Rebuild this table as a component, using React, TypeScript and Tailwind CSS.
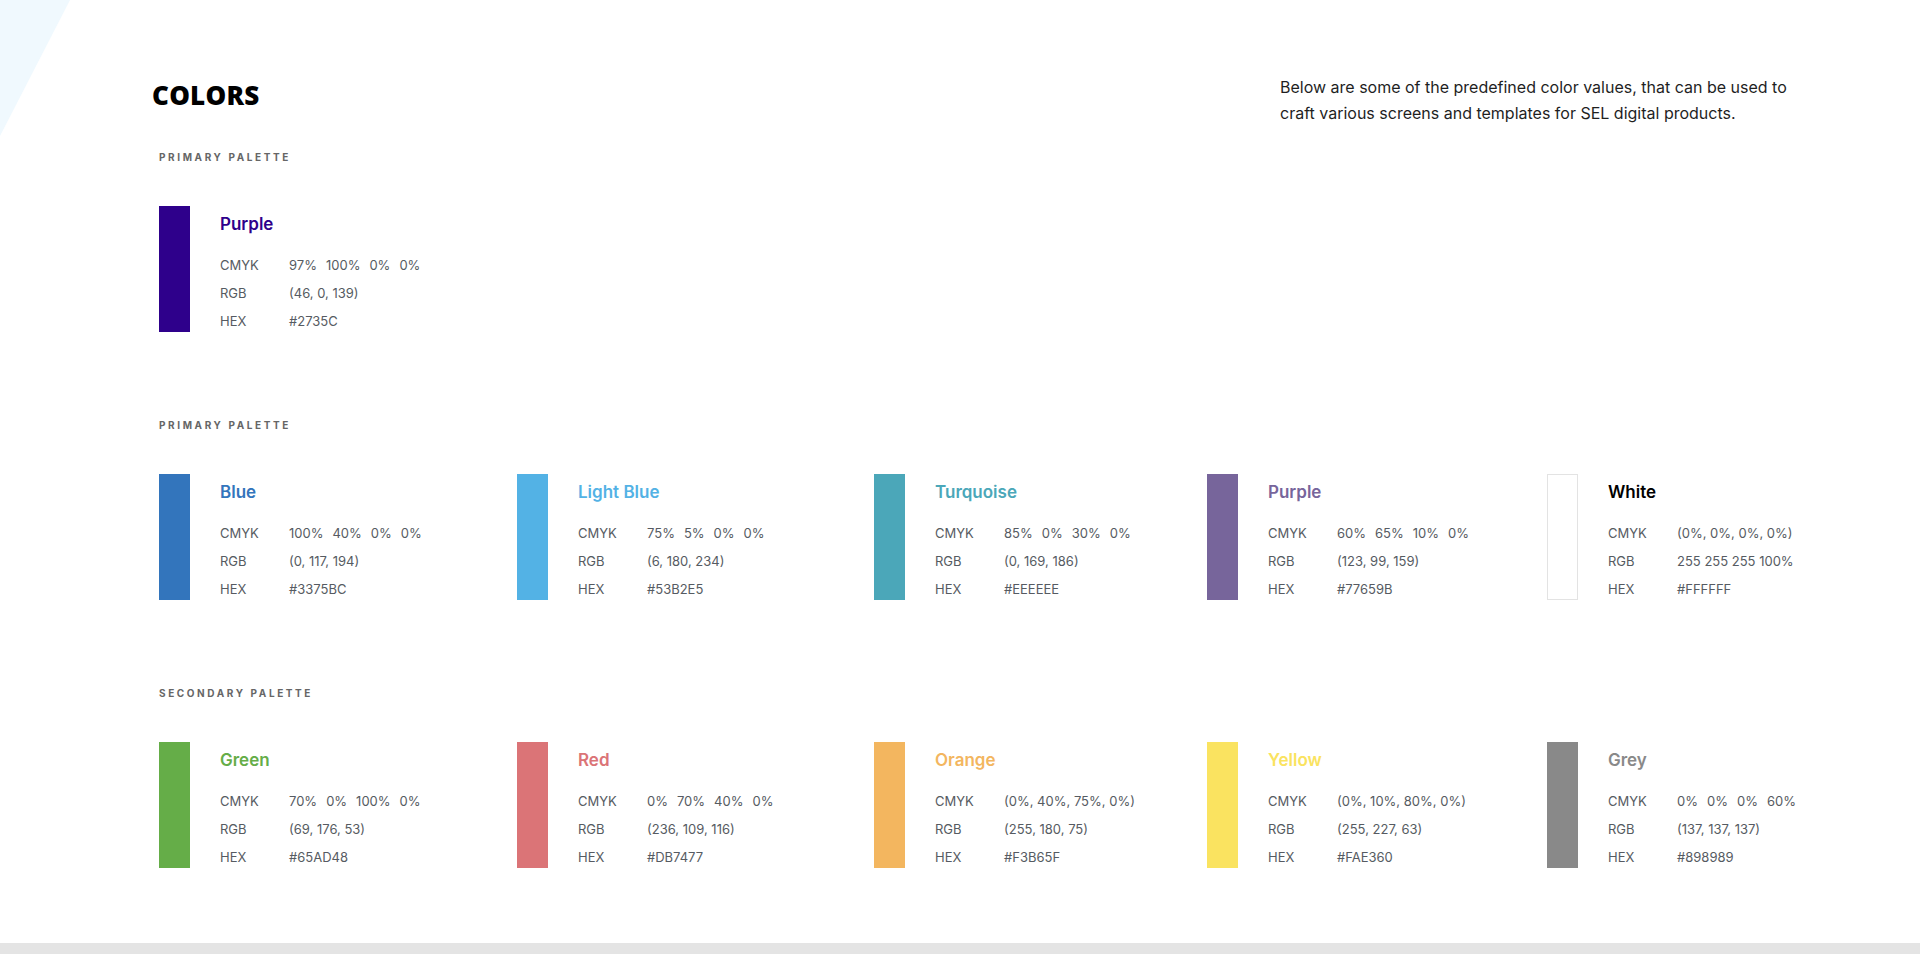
import React from 'react';

type Swatch = {
  name: string;
  color: string;
  text: string;
  cmyk: string[] | string;
  rgb: string;
  hex: string;
  bordered?: boolean;
};

const PRIMARY: Swatch[] = [
  { name: 'Purple', color: 'bg-[#2E008B]', text: 'text-[#2E008B]', cmyk: ['97%', '100%', '0%', '0%'], rgb: '(46, 0, 139)', hex: '#2735C' },
];

const PRIMARY_2: Swatch[] = [
  { name: 'Blue', color: 'bg-[#3375BC]', text: 'text-[#3375BC]', cmyk: ['100%', '40%', '0%', '0%'], rgb: '(0, 117, 194)', hex: '#3375BC' },
  { name: 'Light Blue', color: 'bg-[#53B2E5]', text: 'text-[#53B2E5]', cmyk: ['75%', '5%', '0%', '0%'], rgb: '(6, 180, 234)', hex: '#53B2E5' },
  { name: 'Turquoise', color: 'bg-[#4BA7B9]', text: 'text-[#4BA7B9]', cmyk: ['85%', '0%', '30%', '0%'], rgb: '(0, 169, 186)', hex: '#EEEEEE' },
  { name: 'Purple', color: 'bg-[#77659B]', text: 'text-[#77659B]', cmyk: ['60%', '65%', '10%', '0%'], rgb: '(123, 99, 159)', hex: '#77659B' },
  { name: 'White', color: 'bg-white', text: 'text-black', cmyk: '(0%, 0%, 0%, 0%)', rgb: '255 255 255 100%', hex: '#FFFFFF', bordered: true },
];

const SECONDARY: Swatch[] = [
  { name: 'Green', color: 'bg-[#65AD48]', text: 'text-[#65AD48]', cmyk: ['70%', '0%', '100%', '0%'], rgb: '(69, 176, 53)', hex: '#65AD48' },
  { name: 'Red', color: 'bg-[#DB7477]', text: 'text-[#DB7477]', cmyk: ['0%', '70%', '40%', '0%'], rgb: '(236, 109, 116)', hex: '#DB7477' },
  { name: 'Orange', color: 'bg-[#F3B65F]', text: 'text-[#F3B65F]', cmyk: '(0%, 40%, 75%, 0%)', rgb: '(255, 180, 75)', hex: '#F3B65F' },
  { name: 'Yellow', color: 'bg-[#FAE360]', text: 'text-[#FAE360]', cmyk: '(0%, 10%, 80%, 0%)', rgb: '(255, 227, 63)', hex: '#FAE360' },
  { name: 'Grey', color: 'bg-[#898989]', text: 'text-[#898989]', cmyk: ['0%', '0%', '0%', '60%'], rgb: '(137, 137, 137)', hex: '#898989' },
];

// column widths measured off the mock, they aren't even
const COL_WIDTHS = ['w-[358px]', 'w-[357px]', 'w-[333px]', 'w-[340px]', 'w-[300px]'];

export default function App() {
  return (
    <div className="relative h-[954px] bg-white overflow-hidden flex flex-col font-['Inter','Noto_Sans',sans-serif]">
      {/* faint corner shape */}
      <svg className="absolute top-0 left-0" width="72" height="138" viewBox="0 0 72 138">
        <polygon points="0,0 70,0 0,136" fill="#F0F9FE" />
      </svg>

      <main className="flex-1 pl-[159px]">
        <header className="flex items-start pt-[74px]">
          <h1 className="-ml-[7px] mt-[5px] w-[1128px] text-[26px] leading-8 font-extrabold tracking-[0.01em] text-black font-['Open_Sans',sans-serif]">
            COLORS
          </h1>
          <p className="w-[522px] text-[16px] leading-[26px] text-[#1f1f1f]">
            Below are some of the predefined color values, that can be used to craft various screens and templates for SEL digital products.
          </p>
        </header>

        <Section title="PRIMARY PALETTE" items={PRIMARY} className="mt-[25px]" />
        <Section title="PRIMARY PALETTE" items={PRIMARY_2} className="mt-[87px]" />
        <Section title="SECONDARY PALETTE" items={SECONDARY} className="mt-[87px]" />
      </main>

      <div className="h-[11px] bg-[#E4E4E4]" />
    </div>
  );
}

function Section({ title, items, className }: { title: string; items: Swatch[]; className?: string }) {
  return (
    <section className={className}>
      <h2 className="text-[10px] leading-3 font-bold tracking-[0.26em] text-[#666]">{title}</h2>
      <div className="flex mt-[43px]">
        {items.map((s, i) => (
          <SwatchCard key={s.name + i} swatch={s} width={COL_WIDTHS[i]} />
        ))}
      </div>
    </section>
  );
}

function SwatchCard({ swatch, width }: { swatch: Swatch; width: string }) {
  return (
    <div className={`flex shrink-0 gap-[30px] h-[126px] ${width}`}>
      <div className={`w-[31px] h-[126px] shrink-0 ${swatch.color} ${swatch.bordered ? 'border border-[#E3E3E3]' : ''}`} />
      <div className="pt-[7px]">
        <div className={`text-[17px] leading-[22px] font-semibold ${swatch.text}`}>{swatch.name}</div>
        <div className="mt-[16px] text-[13px] leading-[28px] text-[#565b62]">
          <Row label="CMYK">
            {Array.isArray(swatch.cmyk) ? (
              <span className="flex gap-[9px]">
                {swatch.cmyk.map((v, i) => <span key={i}>{v}</span>)}
              </span>
            ) : (
              swatch.cmyk
            )}
          </Row>
          <Row label="RGB">{swatch.rgb}</Row>
          <Row label="HEX">{swatch.hex}</Row>
        </div>
      </div>
    </div>
  );
}

function Row({ label, children }: { label: string; children: React.ReactNode }) {
  return (
    <div className="flex">
      <span className="w-[69px] shrink-0">{label}</span>
      <span>{children}</span>
    </div>
  );
}
